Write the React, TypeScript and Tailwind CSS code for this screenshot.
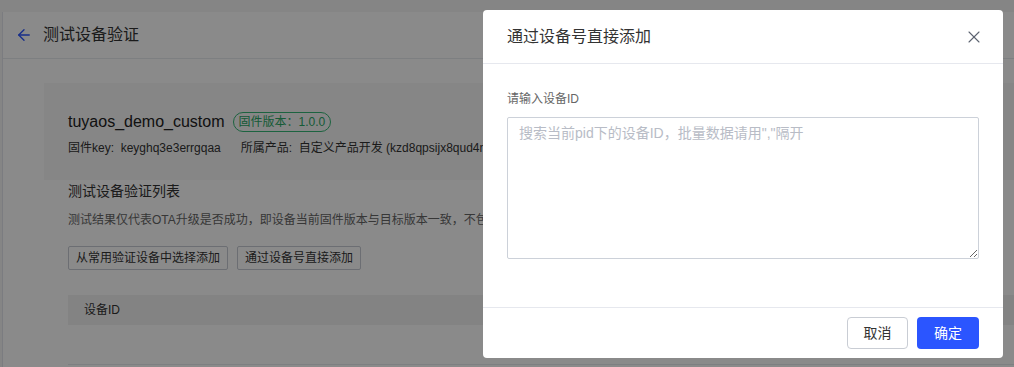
import { ArrowLeft, X } from "lucide-react";

const FONT = { fontFamily: '"Liberation Sans", "Noto Sans CJK SC", sans-serif' };

function PageBehind() {
  return (
    <div className="h-full w-full bg-[#f6f6f6] pt-[12px]">
      <div className="h-full border-l border-[#e3e6ec] bg-white ml-[2px]">
        {/* Header */}
        <div className="flex h-[47px] items-center border-b border-[#e8eaee] pl-[12px]">
          <ArrowLeft className="h-[18px] w-[18px] text-[#2b55ff]" strokeWidth={1.8} />
          <span className="ml-[10px] text-[16px] text-[#333]">测试设备验证</span>
        </div>

        <div className="pl-[41px] pt-[24px]">
          {/* Firmware card */}
          <div className="h-[97px] bg-[#f7f7f7] pl-[24px] pt-[28px]">
            <div className="flex items-center gap-[8px]">
              <span className="text-[16px] font-medium leading-[22px] text-[#222]">tuyaos_demo_custom</span>
              <span className="rounded-full border border-[#35b876] px-[5px] text-[12px] leading-[18px] text-[#2aa866]">
                固件版本：1.0.0
              </span>
            </div>
            <div className="mt-[7px] flex text-[12px] leading-[16px] text-[#333]">
              <span>固件key:&nbsp;&nbsp;keyghq3e3errgqaa</span>
              <span className="ml-[20px] whitespace-nowrap">所属产品:&nbsp;&nbsp;自定义产品开发 (kzd8qpsijx8qud4n)</span>
            </div>
          </div>

          {/* List section */}
          <div className="pl-[24px]">
            <div className="mt-[1px] text-[14px] leading-[20px] text-[#333]">测试设备验证列表</div>
            <div className="mt-[10px] whitespace-nowrap text-[12px] leading-[18px] text-[#666]">
              测试结果仅代表OTA升级是否成功，即设备当前固件版本与目标版本一致，不包含设备功能的验证
            </div>
            <div className="mt-[17px] flex gap-[9px]">
              <button className="h-[24px] rounded-[2px] border border-[#c8ccd4] bg-white px-[7px] text-[12px] text-[#333]">
                从常用验证设备中选择添加
              </button>
              <button className="h-[24px] rounded-[2px] border border-[#c8ccd4] bg-white px-[7px] text-[12px] text-[#333]">
                通过设备号直接添加
              </button>
            </div>
            <div className="mt-[25px] flex h-[30px] items-center bg-[#f3f3f3] pl-[16px] text-[12px] text-[#333]">
              设备ID
            </div>
            <div className="mt-[39px] border-b border-[#e8eaee]" />
          </div>
        </div>
      </div>
    </div>
  );
}

function AddDialog() {
  return (
    <div className="absolute left-[483px] top-[10px] flex h-[348px] w-[520px] flex-col rounded-[4px] bg-white">
      <div className="flex h-[54px] items-center justify-between border-b border-[#e6e8ee] pl-[24px] pr-[19px]">
        <span className="text-[16px] text-[#333]">通过设备号直接添加</span>
        <X className="h-[20px] w-[20px] text-[#5c6370]" strokeWidth={1.3} />
      </div>
      <div className="flex-1 px-[24px] pt-[27px]">
        <div className="text-[12px] leading-[16px] text-[#666]">请输入设备ID</div>
        <textarea
          className="mt-[10px] h-[142px] w-full rounded-[2px] border border-[#ccd1d9] px-[11px] py-[4px] text-[14px] leading-[22px] text-[#333] outline-none placeholder:text-[#b8bcc6]"
          placeholder={'搜索当前pid下的设备ID，批量数据请用","隔开'}
        />
      </div>
      <div className="flex h-[51px] items-center justify-end gap-[9px] border-t border-[#e6e8ee] pr-[24px]">
        <button className="h-[32px] w-[61px] rounded-[4px] border border-[#c9cdd4] bg-white text-[14px] text-[#333]">
          取消
        </button>
        <button className="h-[32px] w-[62px] rounded-[4px] bg-[#2b55ff] text-[14px] text-white">确定</button>
      </div>
    </div>
  );
}

export default function App() {
  return (
    <div className="relative h-[367px] w-[1014px] overflow-hidden" style={FONT}>
      <PageBehind />
      <div className="absolute inset-0 bg-black/[0.46]" />
      <AddDialog />
    </div>
  );
}
